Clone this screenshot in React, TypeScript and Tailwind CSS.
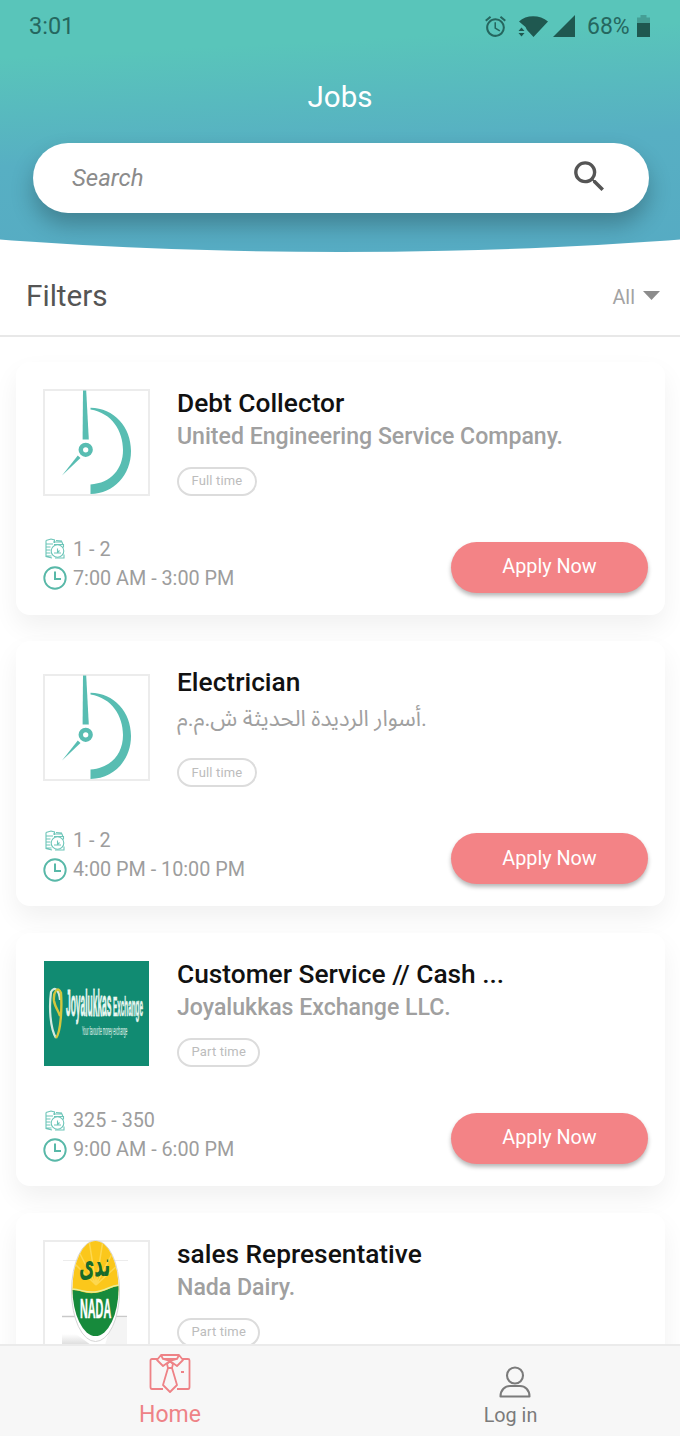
import React from 'react';
import { MdAccessAlarm, MdSearch } from 'react-icons/md';

type Job = {
  title: string;
  company: string;
  arabic?: boolean;
  type: string;
  salary?: string;
  hours?: string;
  logo: React.ReactNode;
  framed?: boolean;
};

const DefaultLogo = () => (
  <svg viewBox="0 0 107 107" className="h-full w-full" fill="#58bdb2">
    <path d="M40 1.500h3.200L45.800 50.500h-6.200z" />
    <circle cx="42.700" cy="60.800" r="4.900" fill="none" stroke="#58bdb2" strokeWidth="4.500" />
    <path d="M34.800 66.500l2.700 2.500L19 86.500z" />
    <path d="M47.500 18.800C71 19 88 38 88 62S71 104.500 47.500 105v-9.500C68 94 80 80 80 61S69 24 47.500 20.500z" />
  </svg>
);

const JoyalukkasLogo = () => (
  <svg viewBox="0 0 107 107" className="h-full w-full">
    <rect x="1" y="1" width="105" height="105" fill="#118b72" />
    <path d="M13 78C7 68 6 47 8 32c3-6 8-3 9 8" fill="none" stroke="#d3eadf" strokeWidth="2.200" />
    <path d="M13 78c5-6 6-31 5-45-3-8-8-1-7 8 1 6 5 11 6 15" fill="none" stroke="#d4c63c" strokeWidth="2.400" />
    <g fill="#e9f7f1" fontFamily="Liberation Sans, sans-serif">
      <text transform="translate(23 56) scale(0.228 1)" fontSize="37" fontWeight="700" stroke="#e9f7f1" strokeWidth="0.800">
        Joyalukkas
      </text>
      <text transform="translate(70 56) scale(0.227 1)" fontSize="28" fontWeight="700" stroke="#e9f7f1" strokeWidth="0.600">
        Exchange
      </text>
      <text transform="translate(39 75) scale(0.27 1)" fontSize="12">
        Your favourite money exchange
      </text>
    </g>
  </svg>
);

const NadaLogo = () => (
  <svg viewBox="0 0 107 107" className="h-full w-full">
    <defs>
      <clipPath id="nada">
        <ellipse cx="52.500" cy="48.500" rx="23" ry="47.500" />
      </clipPath>
      <linearGradient id="floor" x1="0" y1="0" x2="0" y2="1">
        <stop offset="0" stopColor="#fff" />
        <stop offset="1" stopColor="#dcdcdc" />
      </linearGradient>
    </defs>
    <path d="M20 20.500h65" stroke="#ececec" />
    <path d="M19 76.500h65" stroke="#c9c9c9" strokeWidth="1.500" />
    <path d="M19 94h14l15 11H19z" fill="url(#floor)" />
    <path d="M70 78h14v27H62z" fill="#f4f4f4" />
    <ellipse cx="52.500" cy="51" rx="24" ry="50.500" fill="#fff" stroke="#d5d5d5" />
    <g clipPath="url(#nada)">
      <path d="M28 0h50v60H28z" fill="#fbc71b" />
      <path d="M53 45L30 22M53 45L34 8M53 45L46 0M53 45L60 0M53 45L72 8M53 45L76 24" stroke="#fdd84f" strokeWidth="1.500" />
      <path d="M28 50c10 0 13 4 24 3s16-7 26-7v60H28z" fill="#178a3c" />
      <path d="M28 49c10 0 13 4 24 3s16-7 26-7" fill="none" stroke="#e9ee9b" strokeWidth="1.500" />
    </g>
    <text transform="translate(36 36) scale(0.49 1)" fontSize="34" fontWeight="700" fontFamily="DejaVu Sans, sans-serif" fill="#176b2b">
      ندى
    </text>
    <text transform="translate(37 78) scale(0.4 1)" fontSize="27" fontWeight="700" fontFamily="Liberation Sans, sans-serif" fill="#fff" stroke="#fff" strokeWidth="0.500">
      NADA
    </text>
  </svg>
);

const MoneyIcon = () => (
  <svg viewBox="0 0 22 22" className="h-[22px] w-[22px]" fill="none" stroke="#6cc5b8" strokeWidth="1.100">
    <path d="M1 2.500l5-1.500 3.500 1v3M1 2.500v16l6 1.500M1.500 6H8M1.500 9h4M1.500 12h4M1.500 15h4M1.500 18h5M8 4h9l1 3M11 2.500l6 .5" />
    <circle cx="12.500" cy="13" r="6.300" />
    <path d="M9 6.500h9.500v3M10 20h9v-3.500M9 15h7M12.500 10.500v4l2-2" />
  </svg>
);

const ClockIcon = () => (
  <svg viewBox="0 0 24 24" className="h-6 w-6" fill="none" stroke="#58b8a8">
    <circle cx="12" cy="12" r="10.700" strokeWidth="1.900" />
    <path d="M12 5.500V13h6" strokeWidth="2" />
  </svg>
);

const jobs: Job[] = [
  {
    title: 'Debt Collector',
    company: 'United Engineering Service Company.',
    type: 'Full time',
    salary: '1 - 2',
    hours: '7:00 AM - 3:00 PM',
    logo: <DefaultLogo />,
    framed: true,
  },
  {
    title: 'Electrician',
    company: 'أسوار الرديدة الحديثة ش.م.م.',
    arabic: true,
    type: 'Full time',
    salary: '1 - 2',
    hours: '4:00 PM - 10:00 PM',
    logo: <DefaultLogo />,
    framed: true,
  },
  {
    title: 'Customer Service // Cash ...',
    company: 'Joyalukkas Exchange LLC.',
    type: 'Part time',
    salary: '325 - 350',
    hours: '9:00 AM - 6:00 PM',
    logo: <JoyalukkasLogo />,
  },
  {
    title: 'sales Representative',
    company: 'Nada Dairy.',
    type: 'Part time',
    logo: <NadaLogo />,
    framed: true,
  },
];

const StatusBar = () => (
  <div className="flex h-[52px] items-center justify-between pr-[30px] pl-[29px] text-[23.5px] text-[#25675f]">
    <span className="pt-0.5">3:01</span>
    <div className="flex items-center text-[#1f5850]">
      <MdAccessAlarm className="mr-[10px] h-[25px] w-[25px] text-[#25675f]" />
      <svg viewBox="0 0 30 22" className="mr-[5px] h-[22px] w-[30px]" fill="currentColor">
        <path d="M1 6.500C8-.5 22-.5 30 6.500L15.500 22 9 15 7.500 12z" />
        <path d="M.5 16l3-3.500 3 3.500zM.5 18l3 3.500 3-3.500z" />
      </svg>
      <svg viewBox="0 0 22 22" className="mr-[12px] h-[22px] w-[22px]" fill="currentColor">
        <path d="M22 0v22H0z" />
      </svg>
      <span className="mr-[7px] w-[43px] pt-0.5 text-[23px] text-[#25675f]">68%</span>
      <svg viewBox="0 0 13 22" className="h-[22px] w-[13px]" fill="currentColor">
        <path d="M0 8V2.500h3.500V0h6v2.500H13V8z" opacity="0.35" />
        <path d="M0 8h13v14H0z" />
      </svg>
    </div>
  </div>
);

const Header = () => (
  <header className="h-[252px] shrink-0 bg-[linear-gradient(177deg,#59c5ba_20%,#57afc3_58%,#56abc3_100%)] [clip-path:ellipse(160%_100%_at_50%_0)]">
    <StatusBar />
    <h1 className="h-[91px] pt-[25px] text-center text-[29.5px] leading-10 text-white">Jobs</h1>
    <div className="mr-[31px] ml-[33px] flex h-[70px] items-center justify-between rounded-full bg-white pr-[39px] pl-[39px] shadow-[0_12px_22px_rgba(0,0,0,0.25)]">
      <span className="text-[24px] text-[#8b8b8b] italic">Search</span>
      <MdSearch className="-mt-1 h-[41px] w-[41px] text-[#555]" />
    </div>
  </header>
);

const JobCard = ({ job }: { job: Job }) => (
  <article className="relative shrink-0 rounded-[14px] bg-white pt-[27px] pr-[17px] pb-[22px] pl-[27px] shadow-[0_12px_26px_rgba(0,0,0,0.06)]">
    <div className="flex items-center">
      <div className={`mr-[27px] h-[107px] w-[107px] shrink-0 ${job.framed ? 'shadow-[inset_0_0_0_2px_#ececec]' : ''}`}>
        {job.logo}
      </div>
      <div className="flex flex-col items-start">
        <h2 className="text-[26.3px] leading-7 font-medium text-[#111]">{job.title}</h2>
        {job.arabic ? (
          <p className="mb-[17px] text-[22.3px] leading-[45px] text-[#a0a0a0] [font-family:Roboto,'Noto_Sans_Arabic','DejaVu_Sans',sans-serif]">
            {job.company}
          </p>
        ) : (
          <p className="mb-[11px] text-[23.1px] leading-[39px] font-medium text-[#a0a0a0]">{job.company}</p>
        )}
        <span className="flex h-[29px] items-center rounded-full border-2 border-[#dcdcdc] px-[12.5px] pb-px text-[13px] tracking-[0.15px] text-[#bcbcbc]">
          {job.type}
        </span>
      </div>
    </div>
    {job.hours && (
      <div className="mt-[39px] flex items-end justify-between">
        <div className="text-[19.8px] leading-[29px] text-[#9d9d9d]">
          <div className="flex items-center gap-[6px] pl-0.5">
            <MoneyIcon />
            {job.salary}
          </div>
          <div className="flex items-center gap-[6px]">
            <ClockIcon />
            {job.hours}
          </div>
        </div>
        <button className="mt-[6px] h-[51px] w-[197px] rounded-full bg-[#f38386] pb-px text-[19.8px] text-white shadow-[0_3px_4px_rgba(0,0,0,0.28)]">
          Apply Now
        </button>
      </div>
    )}
  </article>
);

const BottomNav = () => (
  <nav className="relative flex h-[92px] shrink-0 border-t-2 border-[#ebebeb] bg-[#f7f7f7]">
    <a className="flex w-[340px] flex-col items-center pt-2 text-[23px] text-[#ee8286]">
      <svg viewBox="0 0 42 40" className="mb-1 h-[40px] w-[42px]" fill="none" stroke="currentColor" strokeWidth="1.800" strokeLinejoin="round">
        <path d="M9 5H3q-1.500 0-1.500 1.500V33q0 2 1.500 2h11M33 5h6q1.500 0 1.500 1.500V33q0 2-1.500 2H28" />
        <path d="M12 1h18l4 5-6 6-7-5-7 5-6-6zM12 1l2 4 7 2 7-2 2-4M14 5h14" />
        <path d="M18 10l3-3 3 3-1 4h-4zM19 14l-5 17 7 7 7-7-5-17M32 18h3" />
      </svg>
      <span className="leading-[34px]">Home</span>
    </a>
    <a className="flex w-[340px] flex-col items-center pt-5 text-[19.8px] text-[#7b7b7b]">
      <svg viewBox="0 0 32 32" className="ml-[10px] h-[32px] w-[32px]" fill="none" stroke="currentColor" strokeWidth="2.100">
        <circle cx="16" cy="9.500" r="8" />
        <path d="M1.500 30.500C1.500 24 6 20 11 20h10c5 0 9.500 4 9.500 10.500z" strokeLinejoin="round" />
      </svg>
      <span className="ml-px leading-[35px]">Log in</span>
    </a>
  </nav>
);

const App = () => {
  return (
    <div className="flex h-[1436px] w-[680px] flex-col overflow-hidden bg-white [font-family:Roboto,sans-serif]">
      <Header />
      <div className="flex h-[85px] shrink-0 items-center justify-between border-b-2 border-[#e8e8e8] pr-[20px] pl-[26px]">
        <h2 className="pt-1.5 text-[29.7px] text-[#555]">Filters</h2>
        <div className="flex items-center gap-[8px] pt-2 text-[19.8px] text-[#a3a3a3]">
          All
          <svg viewBox="0 0 17 9" className="mb-1 h-[9px] w-[17px]" fill="#8c8c8c">
            <path d="M0 0h17L8.500 9z" />
          </svg>
        </div>
      </div>
      <main className="flex min-h-0 flex-1 flex-col gap-[26.7px] overflow-hidden pt-[24.7px] pr-[15px] pl-4">
        {jobs.map((job) => (
          <JobCard key={job.title} job={job} />
        ))}
      </main>
      <BottomNav />
    </div>
  );
};

export default App;
